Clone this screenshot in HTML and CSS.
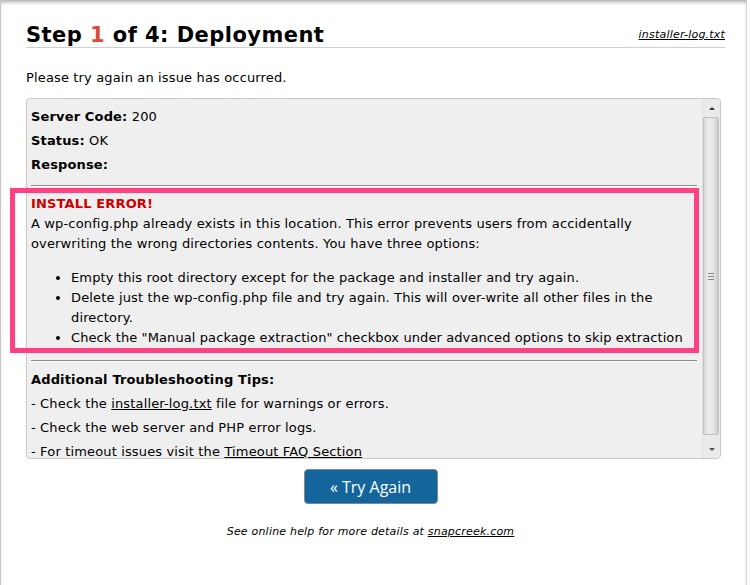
FILE: index.html
```html
<!DOCTYPE html>
<html>
<head>
<meta charset="utf-8">
<link rel="stylesheet" href="styles.css">
</head>
<body>
<div class="page">
  <div class="header">
    <h1 class="title">Step <span class="step-num">1</span> of 4: Deployment</h1>
    <a class="log-link" href="#">installer-log.txt</a>
  </div>
  <p class="intro">Please try again an issue has occurred.</p>

  <div class="result-box">
    <div class="result-content">
      <div class="row"><b>Server Code:</b> 200</div>
      <div class="row"><b>Status:</b> OK</div>
      <div class="row"><b>Response:</b></div>
      <hr class="rule">
      <div class="error">
        <div class="error-title">INSTALL ERROR!</div>
        <div>A wp-config.php already exists in this location. This error prevents users from accidentally overwriting the wrong directories contents. You have three options:</div>
        <ul class="options">
          <li>Empty this root directory except for the package and installer and try again.</li>
          <li>Delete just the wp-config.php file and try again. This will over-write all other files in the directory.</li>
          <li class="tight">Check the "Manual package extraction" checkbox under advanced options to skip extraction</li>
        </ul>
      </div>
      <hr class="rule rule-2">
      <div class="row"><b>Additional Troubleshooting Tips:</b></div>
      <div class="row">- Check the <a href="#">installer-log.txt</a> file for warnings or errors.</div>
      <div class="row">- Check the web server and PHP error logs.</div>
      <div class="row row-last">- For timeout issues visit the <a href="#">Timeout FAQ Section</a></div>
    </div>
    <div class="scrollbar">
      <div class="sb-btn"><span class="arrow-up"></span></div>
      <div class="sb-thumb"><span class="grip"></span></div>
      <div class="sb-btn"><span class="arrow-down"></span></div>
    </div>
  </div>

  <div class="actions">
    <button class="btn">&laquo; Try Again</button>
  </div>
  <p class="help">See online help for more details at <a href="#">snapcreek.com</a></p>

  <div class="highlight"></div>
</div>
</body>
</html>
```

FILE: styles.css
```css
html, body {
  margin: 0;
  padding: 0;
  background: #fff;
}
body {
  font-family: "DejaVu Sans", Verdana, sans-serif;
  font-size: 13px;
  letter-spacing: 0.15px;
  color: #000;
}
.page {
  position: relative;
  box-sizing: border-box;
  width: 747px;
  height: 585px;
  overflow: hidden;
  padding: 23px 21px 0 25px;
  border-left: 1px solid #c8c8c8;
  border-right: 1px solid #d4d4d4;
  box-shadow: inset 0 4px 4px -2px rgba(0,0,0,0.35);
}
.header {
  display: flex;
  justify-content: space-between;
  align-items: baseline;
  border-bottom: 1px solid #cfcfcf;
}
.title {
  margin: 0;
  font-size: 21px;
  letter-spacing: 0.45px;
  line-height: 24px;
  font-weight: bold;
}
.step-num {
  color: #db4b39;
}
.log-link {
  font-size: 11px;
  letter-spacing: 0.2px;
  font-style: italic;
  color: #000;
  position: relative;
  top: -4px;
}
.intro {
  margin: 20px 0 0;
  line-height: 20px;
}
.result-box {
  display: flex;
  margin-top: 10px;
  width: 695px;
  height: 361px;
  box-sizing: border-box;
  border: 1px solid #c8c8c8;
  border-radius: 4px;
  background: #efefef;
  overflow: hidden;
}
.result-content {
  flex: 1;
  padding: 6px 5px 0 4px;
  overflow: hidden;
}
.row {
  line-height: 24px;
}
.row-last {
  line-height: 16px;
  margin-top: 4px;
}
.rule {
  border: 0;
  border-top: 1px solid #8a8a8a;
  border-bottom: 1px solid #fff;
  margin: 8px 0 7px;
}
.rule-2 {
  margin: 12px 0 6px;
}
.error {
  line-height: 20px;
}
.error-title {
  color: #c00;
  font-weight: bold;
}
.options {
  margin: 14px 0 0;
  padding-left: 40px;
}
.tight {
  letter-spacing: 0.1px;
}
a {
  color: #000;
}
.scrollbar {
  width: 17px;
  display: flex;
  flex-direction: column;
  background: #eaeaea;
  border-left: 1px solid #e0e0e0;
}
.sb-btn {
  height: 18px;
  display: flex;
  align-items: center;
  justify-content: center;
}
.arrow-up {
  width: 0;
  height: 0;
  border-left: 3px solid transparent;
  border-right: 3px solid transparent;
  border-bottom: 3px solid #333;
}
.arrow-down {
  width: 0;
  height: 0;
  border-left: 3px solid transparent;
  border-right: 3px solid transparent;
  border-top: 3px solid #555;
}
.sb-thumb {
  flex: 1;
  margin: 0 1px 5px 0;
  border: 1px solid #c2c2c2;
  border-radius: 2px;
  background: linear-gradient(to right, #d6d6d6, #ececec 30%, #e4e4e4 70%, #c8c8c8);
  display: flex;
  align-items: center;
  justify-content: center;
}
.grip {
  width: 6px;
  height: 5px;
  border-top: 1px solid #888;
  border-bottom: 1px solid #888;
  position: relative;
}
.grip::after {
  content: "";
  position: absolute;
  left: 0;
  right: 0;
  top: 2px;
  border-top: 1px solid #888;
}
.actions {
  display: flex;
  justify-content: center;
  margin-top: 10px;
  padding-right: 10px;
}
.btn {
  width: 134px;
  height: 35px;
  box-sizing: border-box;
  background: #13659c;
  color: #fff;
  border: 1px solid #7a8a98;
  border-radius: 4px;
  font-family: "Open Sans", "Noto Sans", sans-serif;
  font-size: 16px;
  letter-spacing: 0;
  padding: 0;
}
.help {
  margin: 20px 0 0;
  padding-right: 10px;
  text-align: center;
  font-size: 11px;
  letter-spacing: 0.2px;
  font-style: italic;
  line-height: 16px;
}
.highlight {
  position: absolute;
  left: 9px;
  top: 188px;
  width: 689px;
  height: 165px;
  box-sizing: border-box;
  border: 5px solid #ff4083;
}
```
